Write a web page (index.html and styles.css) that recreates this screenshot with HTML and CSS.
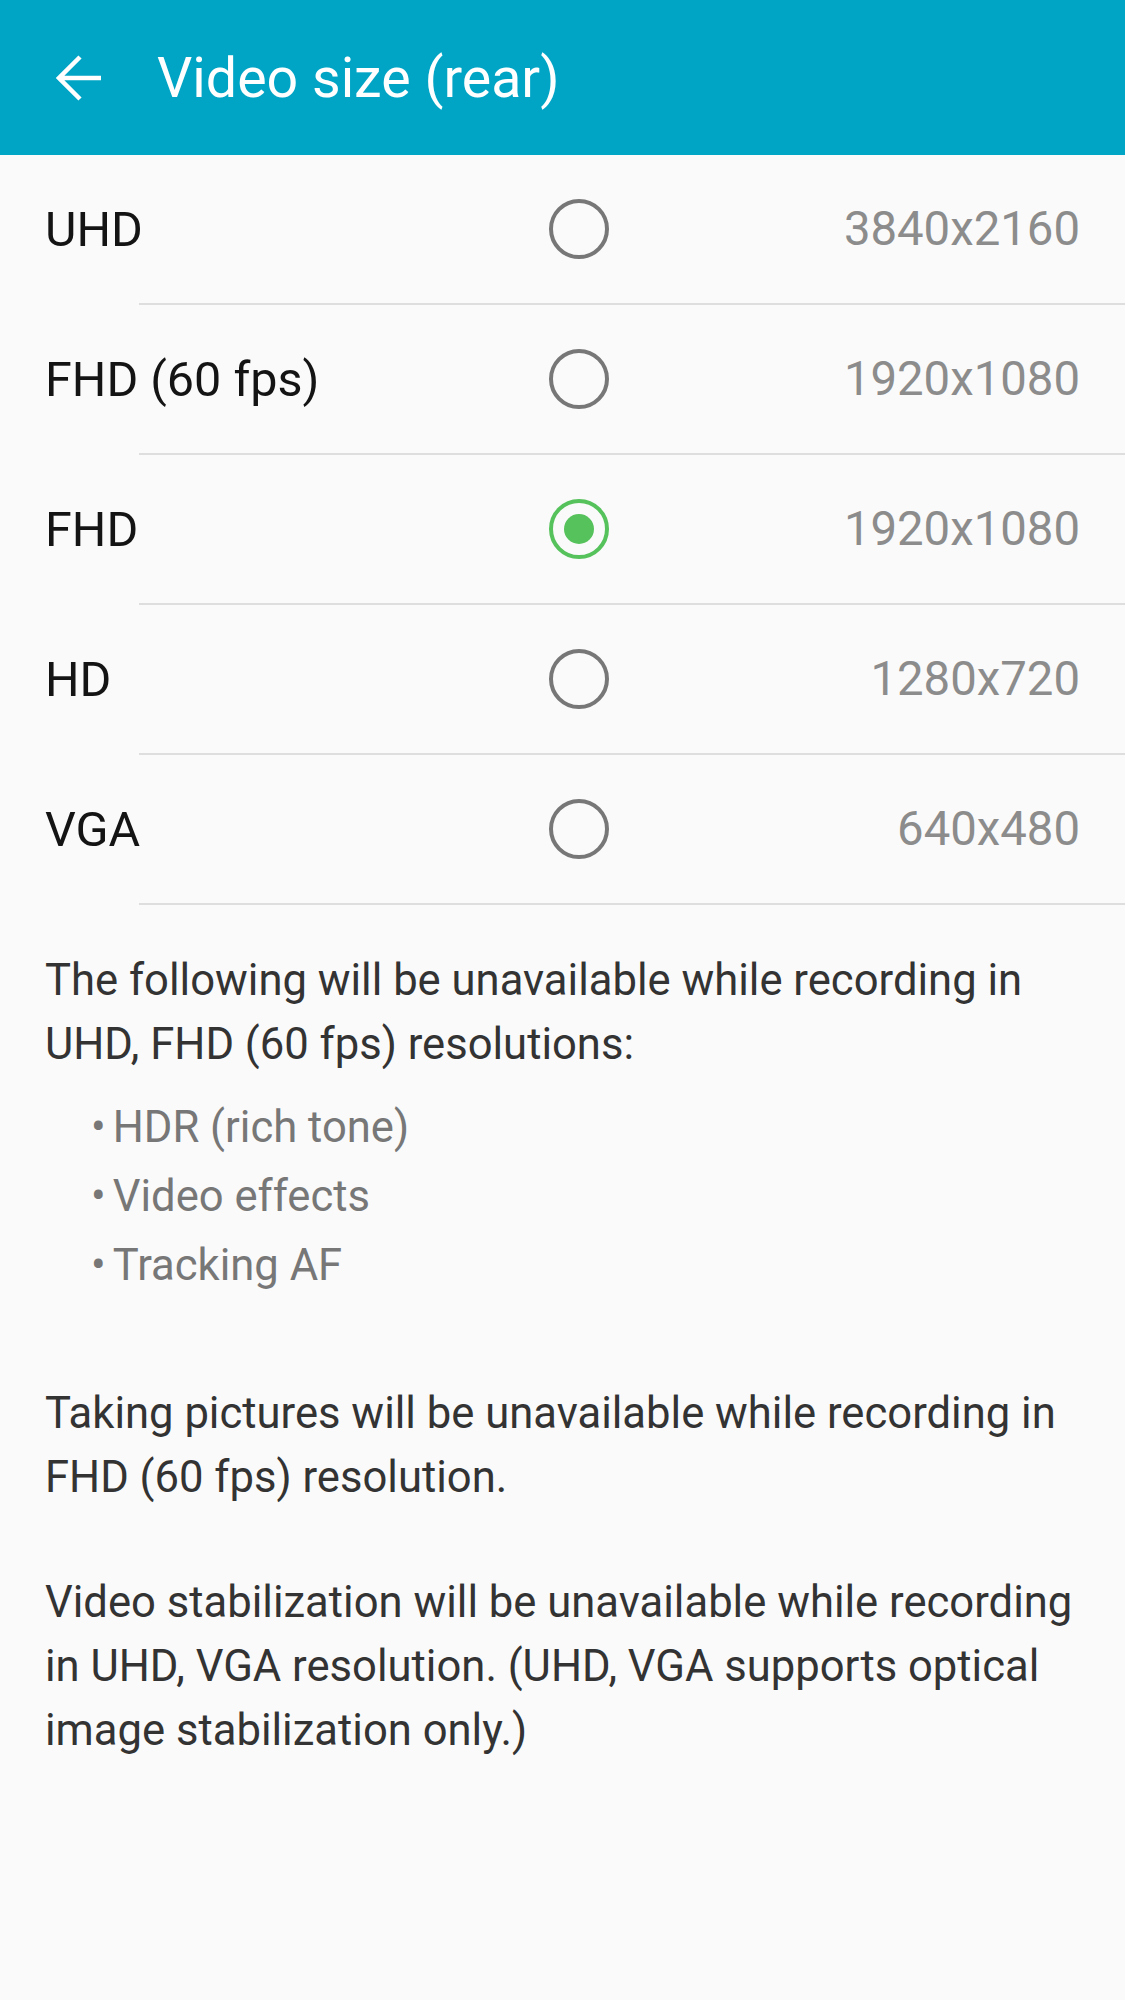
FILE: index.html
```html
<!DOCTYPE html>
<html lang="en">
<head>
    <meta charset="UTF-8">
    <meta name="viewport" content="width=device-width, initial-scale=1.0">
    <title>Video size (rear)</title>
    <link rel="stylesheet" href="styles.css">
</head>
<body>
    <header class="app-bar">
        <svg class="back-icon" width="46" height="46" viewBox="0 0 46 46">
            <path d="M3 23 H45 M24 2 L3 23 L24 44" fill="none" stroke="#fff" stroke-width="4.5"/>
        </svg>
        <h1 class="title">Video size (rear)</h1>
    </header>

    <div class="options">
        <div class="option">
            <span class="label">UHD</span>
            <span class="radio"></span>
            <span class="value">3840x2160</span>
        </div>
        <div class="divider"></div>
        <div class="option">
            <span class="label">FHD (60 fps)</span>
            <span class="radio"></span>
            <span class="value">1920x1080</span>
        </div>
        <div class="divider"></div>
        <div class="option">
            <span class="label">FHD</span>
            <span class="radio checked"><span class="dot"></span></span>
            <span class="value">1920x1080</span>
        </div>
        <div class="divider"></div>
        <div class="option">
            <span class="label">HD</span>
            <span class="radio"></span>
            <span class="value">1280x720</span>
        </div>
        <div class="divider"></div>
        <div class="option">
            <span class="label">VGA</span>
            <span class="radio"></span>
            <span class="value">640x480</span>
        </div>
        <div class="divider"></div>
    </div>

    <div class="notes">
        <p class="note">The following will be unavailable while recording in UHD, FHD (60 fps) resolutions:</p>
        <ul class="features">
            <li>HDR (rich tone)</li>
            <li>Video effects</li>
            <li>Tracking AF</li>
        </ul>
        <p class="note spaced">Taking pictures will be unavailable while recording in FHD (60 fps) resolution.</p>
        <p class="note">Video stabilization will be unavailable while recording in UHD, VGA resolution. (UHD, VGA supports optical image stabilization only.)</p>
    </div>
</body>
</html>
```

FILE: styles.css
```css
body {
    margin: 0;
    padding: 0;
    font-family: Roboto, "Noto Sans", sans-serif;
    background-color: #fafafa;
    min-height: 2000px;
}
.app-bar {
    height: 155px;
    background-color: #00a5c6;
    display: flex;
    align-items: center;
    padding-left: 56px;
}
.back-icon {
    display: block;
    flex-shrink: 0;
}
.title {
    margin: 2px 0 0 55px;
    font-size: 55.5px;
    font-weight: 400;
    color: #fff;
}
.option {
    height: 148px;
    display: grid;
    grid-template-columns: 503px 60px 1fr;
    align-items: center;
    padding: 0 45px 0 45px;
}
.label {
    font-size: 48.5px;
    color: #141414;
}
.value {
    font-size: 47.3px;
    color: #8c8c8c;
    text-align: right;
}
.radio {
    width: 60px;
    height: 60px;
    margin-left: 1px;
    box-sizing: border-box;
    border: 4px solid #777;
    border-radius: 50%;
    display: flex;
    align-items: center;
    justify-content: center;
}
.radio.checked {
    border-color: #56c25b;
}
.radio .dot {
    width: 30px;
    height: 30px;
    border-radius: 50%;
    background-color: #56c25b;
}
.divider {
    height: 2px;
    margin-left: 139px;
    background-color: #dedede;
}
.notes {
    padding: 44px 40px 0 45px;
}
.note {
    margin: 0;
    font-size: 43.6px;
    line-height: 64px;
    color: #333;
}
.note.spaced {
    margin-bottom: 61px;
}
.features {
    list-style: none;
    margin: 16px 0 82px;
    padding: 0 0 0 46px;
}
.features li {
    font-size: 43.6px;
    line-height: 69px;
    color: #777;
}
.features li::before {
    content: "\2022";
    margin-right: 7px;
}
```
